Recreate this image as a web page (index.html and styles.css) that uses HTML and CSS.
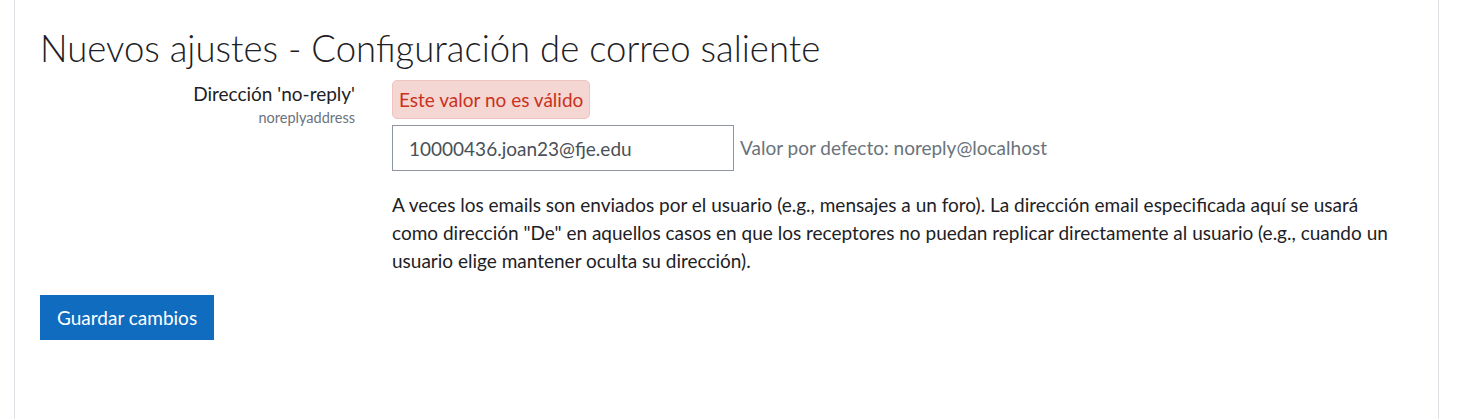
FILE: index.html
```html
<!DOCTYPE html>
<html lang="es">
<head>
<meta charset="utf-8">
<title>Nuevos ajustes - Configuración de correo saliente</title>
<link rel="stylesheet" href="styles.css">
</head>
<body>
<div class="main">
  <h2 class="title">Nuevos ajustes - Configuración de correo saliente</h2>
  <form class="settings">
    <div class="setting">
      <div class="label-col">
        <label class="label" for="id_noreply">Dirección 'no-reply'</label>
        <span class="shortname">noreplyaddress</span>
      </div>
      <div class="content-col">
        <div class="error">Este valor no es válido</div>
        <div class="field-row">
          <input class="input" id="id_noreply" type="text" value="10000436.joan23@fje.edu">
          <span class="default">Valor por defecto: noreply@localhost</span>
        </div>
        <div class="description">A veces los emails son enviados por el usuario (e.g., mensajes a un foro). La dirección email especificada aquí se usará como dirección "De" en aquellos casos en que los receptores no puedan replicar directamente al usuario (e.g., cuando un usuario elige mantener oculta su dirección).</div>
      </div>
    </div>
    <div class="actions">
      <button class="btn" type="button">Guardar cambios</button>
    </div>
  </form>
</div>
</body>
</html>
```
FILE: styles.css
```css
* { box-sizing: border-box; }
html, body { margin: 0; padding: 0; background: #fff; }
body {
  font-family: "Lato", "Open Sans", sans-serif;
  color: #1d2125;
  font-size: 19px;
  line-height: 28px;
}
.main {
  margin-left: 14px;
  width: 1425px;
  min-height: 419px;
  border-left: 1px solid #dee2e6;
  border-right: 1px solid #dee2e6;
  padding: 24px 25px 0 25px;
}
.title {
  margin: 0;
  font-size: 36.5px;
  font-weight: 300;
  line-height: 48px;
  color: #1d2125;
}
.settings { margin-top: 8px; }
.setting {
  display: flex;
}
.label-col {
  width: 315px;
  flex: none;
  text-align: right;
  display: flex;
  flex-direction: column;
  align-items: flex-end;
}
.label { line-height: 28px; }
.shortname { font-size: 14.5px; line-height: 19px; color: #6a737b; }
.content-col {
  margin-left: 37px;
  flex: 1;
  padding-right: 20px;
}
.error {
  display: inline-block;
  background: #f4d6d2;
  color: #ca3120;
  border: 1px solid #efc4be;
  border-radius: 5px;
  padding: 5px 6px 4px;
}
.field-row {
  display: flex;
  align-items: center;
  margin-top: 6px;
}
.input {
  width: 342px;
  height: 46px;
  border: 1px solid #8f959e;
  border-radius: 0;
  padding: 0 16px;
  font: inherit;
  color: #495057;
}
.default { color: #6a737b; margin-left: 6px; }
.description { margin-top: 20px; }
.actions { margin-top: 20px; }
.btn {
  background: #0f6cbf;
  color: #fff;
  border: 0;
  font: inherit;
  height: 45px;
  padding: 0 17px;
  border-radius: 0;
}
```
